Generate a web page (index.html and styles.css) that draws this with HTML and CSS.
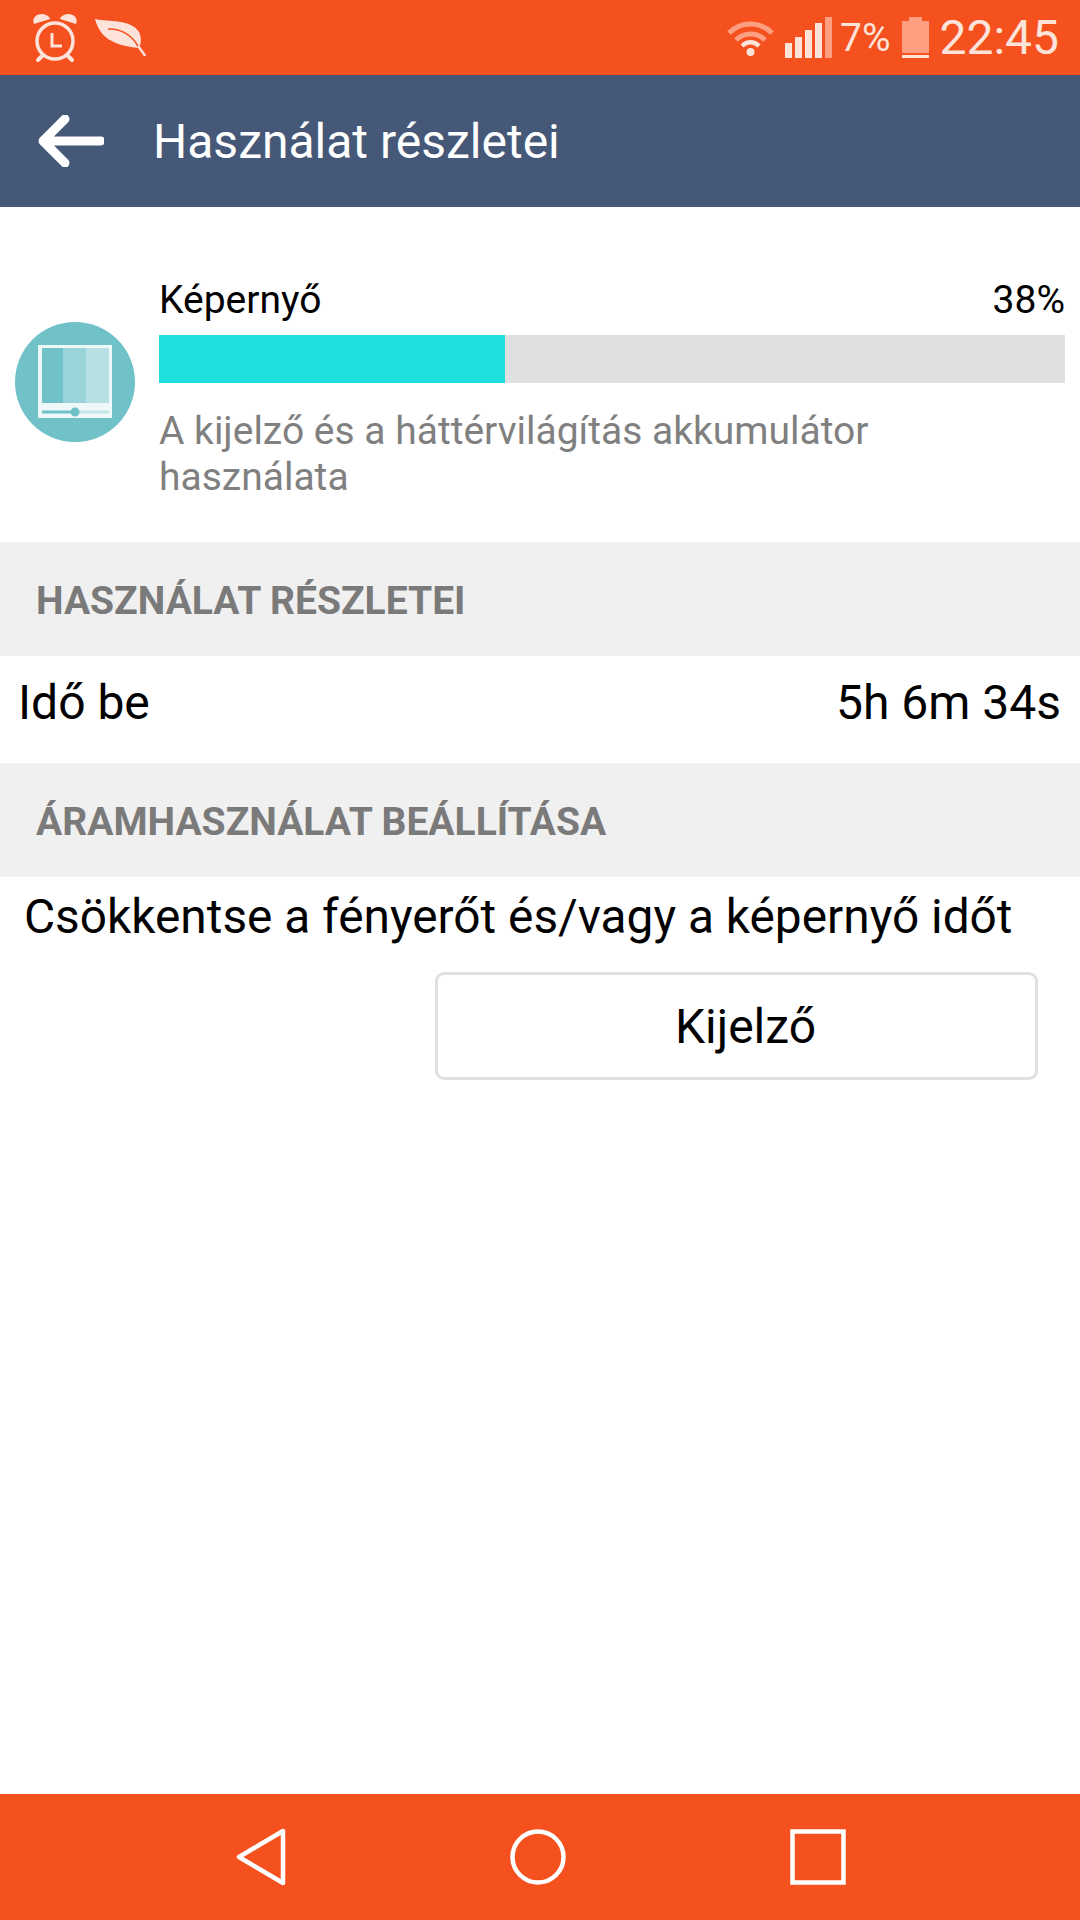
FILE: index.html
```html
<!DOCTYPE html>
<html lang="hu">
<head>
    <meta charset="UTF-8">
    <meta name="viewport" content="width=device-width, initial-scale=1.0">
    <title>Használat részletei</title>
    <link rel="stylesheet" href="styles.css">
</head>
<body>
    <div class="status-bar">
        <div class="status-left">
            <svg width="46" height="50" viewBox="0 0 46 50">
                <path d="M2 11 C-1 4 7 -1 14 2 C16 3 18 4 18 6 Z M44 11 C47 4 39 -1 32 2 C30 3 28 4 28 6 Z" fill="#fde3da"/>
                <circle cx="23" cy="28" r="18" fill="none" stroke="#fde3da" stroke-width="3.5"/>
                <path d="M20 20 V33 H30" fill="none" stroke="#fde3da" stroke-width="3"/>
                <path d="M10 43 L6 47 M36 43 L40 47" stroke="#fde3da" stroke-width="4" stroke-linecap="round"/>
            </svg>
            <svg width="52" height="40" viewBox="0 0 52 40">
                <path d="M0 1 C14 4 36 1 44 14 C47 20 46 26 44 30 C34 29 14 26 6 14 C3 10 1 5 0 1 Z" fill="#fde3da"/>
                <path d="M44 29 C46 33 49 35 50 38" fill="none" stroke="#fde3da" stroke-width="2.5"/>
                <path d="M13 11 C24 10 36 16 43 28" fill="none" stroke="#f4511e" stroke-width="1.5"/>
            </svg>
        </div>
        <div class="status-right">
            <svg class="icon-wifi" width="49" height="38" viewBox="0 0 49 38">
                <path d="M3 14 C15 2 34 2 46 14" fill="none" stroke="#fd9f80" stroke-width="5"/>
                <path d="M10 21 C18 13 31 13 39 21" fill="none" stroke="#fd9f80" stroke-width="5"/>
                <path d="M16 27 C21 22 28 22 33 27" fill="none" stroke="#fde3da" stroke-width="4.5"/>
                <circle cx="24.5" cy="33" r="4" fill="#fde3da"/>
            </svg>
            <div class="signal">
                <span class="signal-bar signal-bar-1"></span>
                <span class="signal-bar signal-bar-2"></span>
                <span class="signal-bar signal-bar-3"></span>
                <span class="signal-bar signal-bar-4"></span>
                <span class="signal-bar signal-bar-5"></span>
            </div>
            <span class="status-percent">7%</span>
            <div class="battery">
                <span class="battery-cap"></span>
                <span class="battery-body"></span>
                <span class="battery-level"></span>
            </div>
            <span class="status-time">22:45</span>
        </div>
    </div>

    <div class="app-bar">
        <svg width="66" height="52" viewBox="0 0 66 52">
            <path d="M27 4 L5 26 L27 48 M5 26 H63" fill="none" stroke="#fff" stroke-width="9" stroke-linecap="round" stroke-linejoin="round"/>
        </svg>
        <h1 class="app-title">Használat részletei</h1>
    </div>

    <div class="usage">
        <svg class="usage-icon" width="120" height="120" viewBox="0 0 120 120">
            <circle cx="60" cy="60" r="60" fill="#70c1c8"/>
            <rect x="23" y="23" width="74" height="73" fill="#eef8f8"/>
            <rect x="27" y="26" width="21" height="55" fill="#70c1c8"/>
            <rect x="48" y="26" width="23" height="55" fill="#9bd4d8"/>
            <rect x="71" y="26" width="23" height="55" fill="#b6e0e3"/>
            <rect x="27" y="88.5" width="33" height="3" fill="#70c1c8"/>
            <rect x="60" y="88.5" width="34" height="3" fill="#c4e6e8"/>
            <circle cx="60" cy="90" r="4.5" fill="#70c1c8"/>
        </svg>
        <div class="usage-info">
            <div class="usage-head">
                <span>Képernyő</span>
                <span>38%</span>
            </div>
            <div class="progress">
                <div class="progress-fill" style="width: 38.2%"></div>
            </div>
            <p class="usage-desc">A kijelző és a háttérvilágítás akkumulátor használata</p>
        </div>
    </div>

    <div class="section-title">HASZNÁLAT RÉSZLETEI</div>
    <div class="row">
        <span>Idő be</span>
        <span>5h 6m 34s</span>
    </div>
    <div class="section-title">ÁRAMHASZNÁLAT BEÁLLÍTÁSA</div>
    <div class="advice">
        <p class="advice-text">Csökkentse a fényerőt és/vagy a képernyő időt</p>
        <a class="advice-button">Kijelző</a>
    </div>

    <div class="nav-bar">
        <svg width="50" height="58" viewBox="0 0 50 58">
            <path d="M47 3 V55 L3 29 Z" fill="none" stroke="#fff" stroke-width="4.5" stroke-linejoin="round"/>
        </svg>
        <svg width="56" height="56" viewBox="0 0 56 56">
            <circle cx="28" cy="28" r="25.5" fill="none" stroke="#fff" stroke-width="4.5"/>
        </svg>
        <svg width="56" height="56" viewBox="0 0 56 56">
            <rect x="2.5" y="2.5" width="51" height="51" fill="none" stroke="#fff" stroke-width="4.5"/>
        </svg>
    </div>
</body>
</html>
```

FILE: styles.css
```css
* {
    box-sizing: border-box;
}

body {
    margin: 0;
    height: 1920px;
    display: flex;
    flex-direction: column;
    background-color: #fff;
    font-family: Roboto, "Liberation Sans", sans-serif;
    color: #000;
}

.status-bar {
    height: 75px;
    padding: 0 21px 0 32px;
    display: flex;
    align-items: center;
    justify-content: space-between;
    background-color: #f4511e;
    color: #fde3da;
}

.status-left {
    display: flex;
    align-items: center;
    gap: 17px;
}

.status-right {
    display: flex;
    align-items: center;
}

.icon-wifi {
    margin-right: 10px;
}

.signal {
    display: flex;
    align-items: flex-end;
    gap: 3px;
    height: 41px;
    margin-right: 8px;
}

.signal-bar {
    width: 7px;
    background-color: #fde3da;
}

.signal-bar-1 { height: 15px; }
.signal-bar-2 { height: 21px; }
.signal-bar-3 { height: 28px; }
.signal-bar-4 { height: 35px; }
.signal-bar-5 { height: 41px; background-color: #fd9f80; }

.status-percent {
    font-size: 39px;
    margin-right: 12px;
}

.battery {
    position: relative;
    width: 27px;
    height: 41px;
    margin-right: 10px;
}

.battery-cap {
    position: absolute;
    top: 0;
    left: 7px;
    width: 13px;
    height: 4px;
    background-color: #fd9f80;
}

.battery-body {
    position: absolute;
    top: 4px;
    left: 0;
    right: 0;
    bottom: 5px;
    background-color: #fd9f80;
}

.battery-level {
    position: absolute;
    left: 0;
    right: 0;
    bottom: 0;
    height: 3px;
    background-color: #fde3da;
}

.status-time {
    font-size: 48px;
}

.app-bar {
    height: 132px;
    padding-left: 38px;
    display: flex;
    align-items: center;
    background-color: #455878;
    color: #fff;
}

.app-title {
    margin: 0 0 0 49px;
    font-size: 48px;
    font-weight: 400;
}

.usage {
    height: 335px;
    padding: 71px 15px 0;
    display: flex;
    align-items: flex-start;
    gap: 24px;
}

.usage-icon {
    flex-shrink: 0;
    margin-top: 44px;
}

.usage-info {
    flex: 1;
}

.usage-head {
    display: flex;
    justify-content: space-between;
    font-size: 39px;
    line-height: 44px;
    margin-bottom: 13px;
}

.progress {
    height: 48px;
    background-color: #e0e0e0;
}

.progress-fill {
    height: 100%;
    background-color: #1edfdb;
}

.usage-desc {
    margin: 25px 0 0;
    max-width: 720px;
    font-size: 39px;
    line-height: 46px;
    color: #808080;
}

.section-title {
    height: 114px;
    padding: 3px 0 0 36px;
    display: flex;
    align-items: center;
    background-color: #f0f0f0;
    font-size: 39px;
    font-weight: 700;
    color: #7a7a7a;
}

.row {
    height: 107px;
    padding: 0 19px 14px 18px;
    display: flex;
    align-items: center;
    justify-content: space-between;
    font-size: 48px;
}

.advice {
    flex: 1;
    padding: 15px 42px 0 24px;
    display: flex;
    flex-direction: column;
    align-items: flex-end;
}

.advice-text {
    align-self: flex-start;
    margin: 0;
    font-size: 47.8px;
    line-height: 50px;
}

.advice-button {
    width: 603px;
    height: 108px;
    margin-top: 30px;
    padding-left: 18px;
    display: flex;
    align-items: center;
    justify-content: center;
    border: 3px solid #e0e0e0;
    border-radius: 9px;
    font-size: 48px;
}

.nav-bar {
    height: 126px;
    padding: 0 234px 0 236px;
    display: flex;
    align-items: center;
    justify-content: space-between;
    background-color: #f4511e;
}
```
